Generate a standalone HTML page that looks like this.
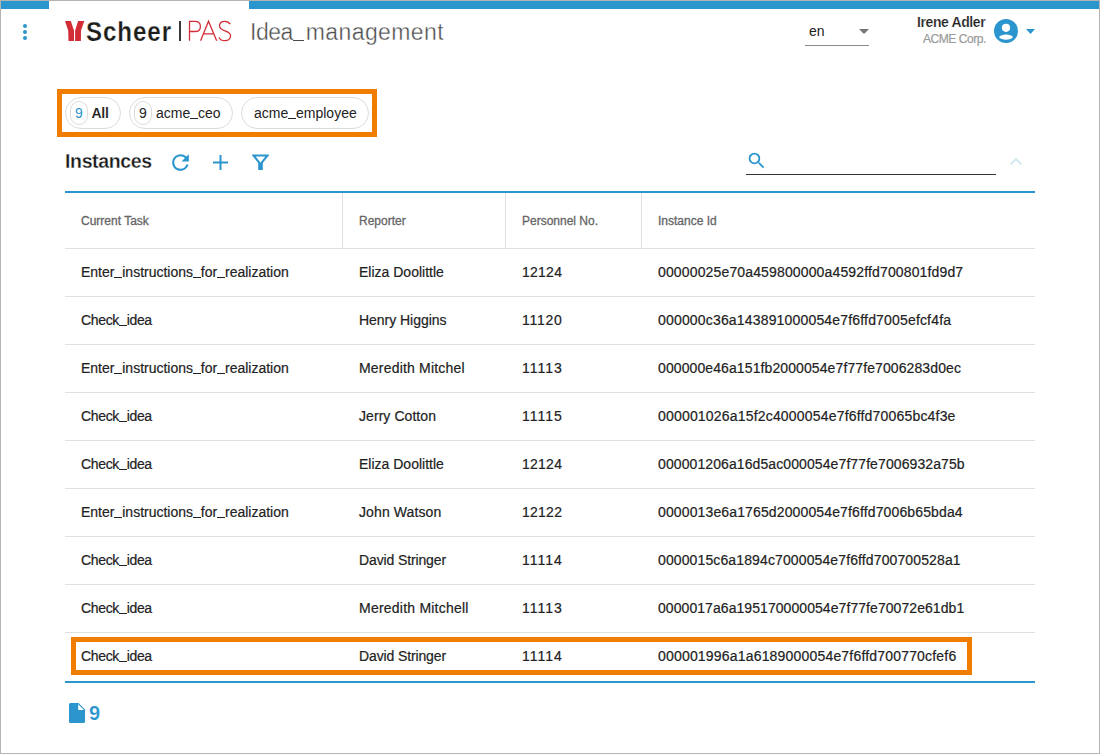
<!DOCTYPE html>
<html><head><meta charset="utf-8">
<style>
*{box-sizing:border-box;margin:0;padding:0}
html,body{width:1100px;height:754px;overflow:hidden;background:#fff}
body{position:relative;font-family:"Liberation Sans",sans-serif;color:#222}
.frame{position:absolute;left:0;top:0;width:1100px;height:754px;border:1px solid #b4b4b4}
.bar{position:absolute;top:1px;height:8px;background:#2b95ce}
.abs{position:absolute;white-space:nowrap}
.dot{position:absolute;left:23px;width:4px;height:4px;border-radius:50%;background:#2b95ce}
.u{display:inline-block;width:0.556em;height:1px;background:currentColor;vertical-align:-1px}
.title{left:250px;top:18px;font-size:23px;color:#4a4a4a;line-height:28px;-webkit-text-stroke:0.4px #fff}
.chipbox{position:absolute;left:57px;top:89px;width:320px;height:48px;border:5px solid #f07d00}
.chip{position:absolute;top:97px;height:32px;border:1px solid #dcdcdc;border-radius:16px;font-size:14px;line-height:30px;color:#222}
.chip span{position:absolute}
.badge{position:absolute;top:3px;width:18px;height:24px;border:1px solid #dcdcdc;border-radius:12px;text-align:center;line-height:22px;font-size:14px}
.th{position:absolute;top:214px;font-size:12px;color:#666;line-height:14px;-webkit-text-stroke:0.3px #666}
.hline{position:absolute;left:65px;width:970px;height:1px;background:#e0e0e0}
.vline{position:absolute;top:193px;width:1px;height:55px;background:#e0e0e0}
.td{position:absolute;font-size:14px;line-height:16px;color:#222;white-space:nowrap;-webkit-text-stroke:0.2px #222}
.ck{letter-spacing:-0.35px}
.id{letter-spacing:0.15px}
</style></head><body>
<div class="frame"></div>
<div class="bar" style="left:1px;width:48px"></div><div class="bar" style="left:249px;width:850px"></div>
<div class="dot" style="top:24px"></div>
<div class="dot" style="top:30px"></div>
<div class="dot" style="top:36px"></div>
<svg class="abs" style="left:64px;top:20px" width="22" height="22" viewBox="0 0 22 22">
<path d="M1 1 L6.8 1 L10 10.5 L10 21 L4.5 21 L4.2 10.5 Z" fill="#d22d36"/>
<path d="M14.1 1 L20.3 1 L17 10.5 L16.9 21 L11.1 21 L11.1 10.5 Z" fill="#d22d36"/>
</svg>
<div class="abs" style="left:86px;top:16px;font-size:28px;font-weight:700;color:#1d1d1b;letter-spacing:1.1px;transform:scaleX(0.86);transform-origin:0 0;-webkit-text-stroke:0.25px #fff;line-height:32px">Scheer</div>
<div class="abs" style="left:179px;top:21px;width:2px;height:20px;background:#3a3a3a"></div>
<svg class="abs" style="left:186px;top:19px" width="48" height="24" viewBox="0 0 48 24" fill="none" stroke="#d22d36" stroke-width="1.3">
<path d="M3.5 21.7V2.3H9C12.5 2.3 14.4 4.5 14.4 7.4C14.4 10.3 12.5 12.5 9 12.5H3.5"/>
<path d="M14.6 21.7L22.5 2.3L30.7 21.7M18 14.9H27.2"/>
<path d="M44.2 5.2C43 3.3 41 2.3 38.8 2.3C35.6 2.3 33.5 4.2 33.5 6.8C33.5 9.6 36 10.8 39 11.8C42.3 12.9 44.6 14.2 44.6 16.8C44.6 19.8 42 21.7 38.8 21.7C36.2 21.7 34 20.5 32.9 18.5"/>
</svg>
<div class="abs title"><span style="letter-spacing:-0.5px">Idea</span><i class="u" style="width:11px;margin-left:0.5px"></i><span style="margin-left:1.5px;letter-spacing:0.4px">management</span></div>
<div class="abs" style="left:809px;top:23px;font-size:14px;line-height:16px;color:#222">en</div>
<svg class="abs" style="left:859px;top:29px" width="10" height="5"><path d="M0 0 L10 0 L5 5 Z" fill="#757575"/></svg>
<div class="abs" style="left:805px;top:45px;width:64px;height:1px;background:#8a8a8a"></div>
<div class="abs" style="left:917px;top:14px;font-size:14px;font-weight:700;letter-spacing:-0.4px;line-height:16px;color:#222;-webkit-text-stroke:0.2px #fff">Irene Adler</div>
<div class="abs" style="left:923px;top:32px;font-size:12px;letter-spacing:-0.45px;line-height:14px;color:#999;-webkit-text-stroke:0.2px #999">ACME Corp.</div>
<svg class="abs" style="left:994px;top:19px" width="24" height="24" viewBox="0 0 24 24">
<circle cx="12" cy="12" r="12" fill="#2b95ce"/>
<circle cx="12" cy="8.8" r="4.1" fill="#fff"/>
<path d="M5 18 C7 14.5 17 14.5 19 18 C17 21.5 7 21.5 5 18 Z" fill="#fff"/>
</svg>
<svg class="abs" style="left:1026px;top:29px" width="9" height="5"><path d="M0 0 L9 0 L4.5 5 Z" fill="#2b95ce"/></svg>
<div class="chipbox"></div>
<div class="chip" style="left:65px;width:56px"><div class="badge" style="left:4px;color:#2b95ce">9</div><span style="left:25.5px;font-weight:700;letter-spacing:-0.3px;-webkit-text-stroke:0.1px #fff">All</span></div>
<div class="chip" style="left:129px;width:104px"><div class="badge" style="left:4px">9</div><span style="left:26px">acme<i class="u"></i>ceo</span></div>
<div class="chip" style="left:241px;width:128px"><span style="left:12px">acme<i class="u"></i>employee</span></div>
<div class="abs" style="left:65px;top:150px;font-size:19.5px;font-weight:700;letter-spacing:-0.35px;line-height:22px;color:#1a1a1a;-webkit-text-stroke:0.3px #fff">Instances</div>
<svg class="abs" style="left:168px;top:149.5px" width="25" height="25" viewBox="0 0 24 24"><path d="M17.65 6.35A7.958 7.958 0 0 0 12 4c-4.42 0-7.99 3.58-7.99 8s3.570 8 7.990 8c3.73 0 6.84-2.55 7.73-6h-2.08A5.990 5.990 0 0 1 12 18c-3.31 0-6-2.69-6-6s2.69-6 6-6c1.66 0 3.14.69 4.22 1.78L13 11h7V4l-2.35 2.35z" fill="#2b95ce"/></svg>
<svg class="abs" style="left:213px;top:155px" width="15" height="15" viewBox="0 0 15 15"><path d="M7.5 0V15M0 7.5H15" stroke="#2b95ce" stroke-width="2"/></svg>
<svg class="abs" style="left:252px;top:154px" width="17" height="16" viewBox="0 0 17 16"><path d="M1.5 1.5H15.5L9.8 8.5V15H7.2V8.5Z" fill="none" stroke="#2b95ce" stroke-width="2"/><path d="M7.3 8.5H9.9V15.5H7.3Z" fill="#2b95ce"/></svg>
<svg class="abs" style="left:745.8px;top:149.6px" width="21.4" height="21.4" viewBox="0 0 24 24"><path d="M15.5 14h-.79l-.28-.27A6.471 6.471 0 0 0 16 9.5 6.500 6.500 0 1 0 9.5 16c1.61 0 3.09-.59 4.230-1.57l.27.28v.79l5 4.99L20.49 19l-4.99-5zm-6 0C7.01 14 5 11.99 5 9.5S7.01 5 9.5 5 14 7.01 14 9.5 11.99 14 9.5 14z" fill="#2b95ce"/></svg>
<div class="abs" style="left:746px;top:174px;width:250px;height:1px;background:#333"></div>
<svg class="abs" style="left:1009px;top:157px" width="14" height="9" viewBox="0 0 14 9"><path d="M1.5 7.5L7 2L12.5 7.5" fill="none" stroke="#d6e9f4" stroke-width="2"/></svg>
<div class="abs" style="left:65px;top:191px;width:970px;height:2px;background:#2b95ce"></div>
<div class="th" style="left:81px">Current Task</div>
<div class="th" style="left:359px">Reporter</div>
<div class="th" style="left:522px">Personnel No.</div>
<div class="th" style="left:658px">Instance Id</div>
<div class="vline" style="left:342px"></div>
<div class="vline" style="left:505px"></div>
<div class="vline" style="left:641px"></div>
<div class="hline" style="top:248px"></div>
<div class="td" style="top:264px;left:81px">Enter<i class="u"></i>instructions<i class="u"></i>for<i class="u"></i>realization</div>
<div class="td" style="top:264px;left:359px;letter-spacing:0.0px">Eliza Doolittle</div>
<div class="td" style="top:264px;left:522px;letter-spacing:0.25px">12124</div>
<div class="td" style="top:264px;left:658px;letter-spacing:0.145px">00000025e70a459800000a4592ffd700801fd9d7</div>
<div class="hline" style="top:296px"></div>
<div class="td ck" style="top:312px;left:81px">Check<i class="u"></i>idea</div>
<div class="td" style="top:312px;left:359px;letter-spacing:-0.033px">Henry Higgins</div>
<div class="td" style="top:312px;left:522px;letter-spacing:0.75px">11120</div>
<div class="td" style="top:312px;left:658px;letter-spacing:0.173px">000000c36a143891000054e7f6ffd7005efcf4fa</div>
<div class="hline" style="top:344px"></div>
<div class="td" style="top:360px;left:81px">Enter<i class="u"></i>instructions<i class="u"></i>for<i class="u"></i>realization</div>
<div class="td" style="top:360px;left:359px;letter-spacing:0.193px">Meredith Mitchel</div>
<div class="td" style="top:360px;left:522px;letter-spacing:1.0px">11113</div>
<div class="td" style="top:360px;left:658px;letter-spacing:0.101px">000000e46a151fb2000054e7f77fe7006283d0ec</div>
<div class="hline" style="top:392px"></div>
<div class="td ck" style="top:408px;left:81px">Check<i class="u"></i>idea</div>
<div class="td" style="top:408px;left:359px;letter-spacing:0.064px">Jerry Cotton</div>
<div class="td" style="top:408px;left:522px;letter-spacing:1.0px">11115</div>
<div class="td" style="top:408px;left:658px;letter-spacing:0.186px">000001026a15f2c4000054e7f6ffd70065bc4f3e</div>
<div class="hline" style="top:440px"></div>
<div class="td ck" style="top:456px;left:81px">Check<i class="u"></i>idea</div>
<div class="td" style="top:456px;left:359px;letter-spacing:0.0px">Eliza Doolittle</div>
<div class="td" style="top:456px;left:522px;letter-spacing:0.25px">12124</div>
<div class="td" style="top:456px;left:658px;letter-spacing:0.096px">000001206a16d5ac000054e7f77fe7006932a75b</div>
<div class="hline" style="top:488px"></div>
<div class="td" style="top:504px;left:81px">Enter<i class="u"></i>instructions<i class="u"></i>for<i class="u"></i>realization</div>
<div class="td" style="top:504px;left:359px;letter-spacing:0.11px">John Watson</div>
<div class="td" style="top:504px;left:522px;letter-spacing:0.25px">12122</div>
<div class="td" style="top:504px;left:658px;letter-spacing:0.132px">0000013e6a1765d2000054e7f6ffd7006b65bda4</div>
<div class="hline" style="top:536px"></div>
<div class="td ck" style="top:552px;left:81px">Check<i class="u"></i>idea</div>
<div class="td" style="top:552px;left:359px;letter-spacing:-0.123px">David Stringer</div>
<div class="td" style="top:552px;left:522px;letter-spacing:1.0px">11114</div>
<div class="td" style="top:552px;left:658px;letter-spacing:0.119px">0000015c6a1894c7000054e7f6ffd700700528a1</div>
<div class="hline" style="top:584px"></div>
<div class="td ck" style="top:600px;left:81px">Check<i class="u"></i>idea</div>
<div class="td" style="top:600px;left:359px;letter-spacing:0.225px">Meredith Mitchell</div>
<div class="td" style="top:600px;left:522px;letter-spacing:1.0px">11113</div>
<div class="td" style="top:600px;left:658px;letter-spacing:0.065px">0000017a6a195170000054e7f77fe70072e61db1</div>
<div class="hline" style="top:632px"></div>
<div class="td ck" style="top:648px;left:81px">Check<i class="u"></i>idea</div>
<div class="td" style="top:648px;left:359px;letter-spacing:-0.123px">David Stringer</div>
<div class="td" style="top:648px;left:522px;letter-spacing:1.0px">11114</div>
<div class="td" style="top:648px;left:658px;letter-spacing:0.186px">000001996a1a6189000054e7f6ffd700770cfef6</div>
<div class="abs" style="left:65px;top:681px;width:970px;height:2px;background:#2b95ce"></div>
<div class="abs" style="left:71px;top:637px;width:901px;height:38px;border:5px solid #f07d00"></div>
<svg class="abs" style="left:69px;top:703px" width="16" height="20" viewBox="0 0 16 20"><path d="M1.5 0H9.5L16 6.5V18.5A1.5 1.5 0 0 1 14.5 20H1.5A1.5 1.5 0 0 1 0 18.5V1.5A1.5 1.5 0 0 1 1.5 0Z" fill="#2b95ce"/><path d="M9.2 1.2V7H15Z" fill="#fff"/></svg>
<div class="abs" style="left:89px;top:702px;font-size:20px;font-weight:700;line-height:22px;color:#2b95ce;-webkit-text-stroke:0.15px #fff">9</div>
</body></html>
